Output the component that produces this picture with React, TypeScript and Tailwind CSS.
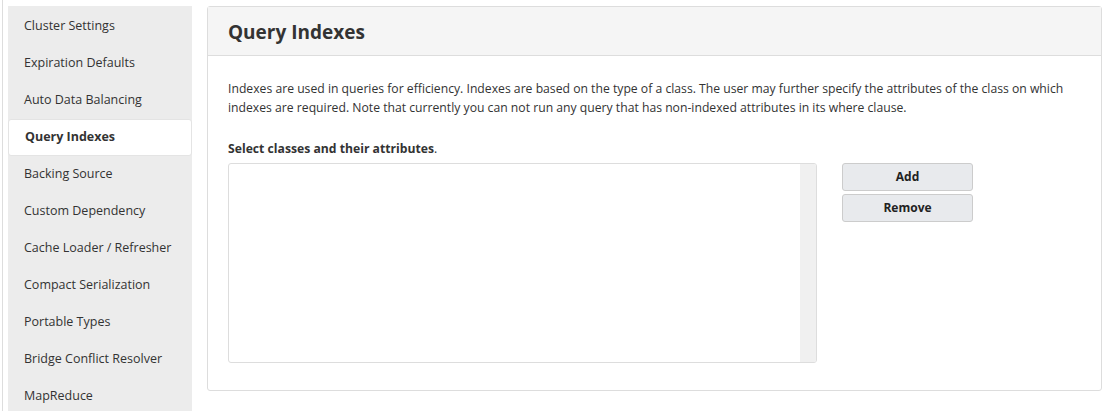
import React from "react";

const navItems = [
  "Cluster Settings",
  "Expiration Defaults",
  "Auto Data Balancing",
  "Query Indexes",
  "Backing Source",
  "Custom Dependency",
  "Cache Loader / Refresher",
  "Compact Serialization",
  "Portable Types",
  "Bridge Conflict Resolver",
  "MapReduce",
];

export default function App() {
  return (
    <div className="w-[1109px] h-[411px] overflow-hidden bg-white flex font-['Open_Sans',_sans-serif] text-[#333]">
      {/* Barre latérale */}
      <div className="w-[193px] shrink-0 pl-[2px]">
        <div className="h-full border-l border-[#ddd] pl-[5px] pt-[6px]">
          <div className="bg-[#ececec] h-full w-[184px] pt-[2px]">
            {navItems.map((item) => (
              <div
                key={item}
                className={`h-[37px] flex items-center pl-[16px] text-[12.5px] ${
                  item === "Query Indexes"
                    ? "bg-white font-bold rounded-[3px] border border-[#e4e4e4] pl-[15px]"
                    : ""
                }`}
              >
                {item}
              </div>
            ))}
          </div>
        </div>
      </div>

      {/* Panneau principal */}
      <div className="flex-1 pt-[6px] pl-[14px] pr-[7px] pb-[20px]">
        <div className="h-[385px] border border-[#ddd] rounded-[3px] flex flex-col">
          <div className="h-[49px] bg-[#f5f5f5] border-b border-[#ddd] flex items-center px-[20px] pt-[2px]">
            <h1 className="text-[19px] font-bold text-[#333]">Query Indexes</h1>
          </div>
          <div className="px-[20px] pt-[23px]">
            <p className="text-[12.2px] leading-[19px]">
              Indexes are used in queries for efficiency. Indexes are based on the type of a class. The user may further specify the attributes of the class on which indexes are required. Note that currently you can not run any query that has non-indexed attributes in its where clause.
            </p>
            <p className="text-[12.2px] font-bold mt-[22px] leading-[19px]">
              Select classes and their attributes<span className="font-normal">.</span>
            </p>
            <div className="flex mt-[5px] gap-[25px]">
              <div className="w-[589px] h-[200px] border border-[#ddd] rounded-[3px] flex justify-end overflow-hidden">
                <div className="w-[16px] h-full bg-[#f0f0f0]" />
              </div>
              <div className="flex flex-col gap-[3px]">
                <button className="w-[131px] h-[28px] bg-[#e8eaed] border border-[#ccc] rounded-[3px] text-[12px] font-bold text-[#222]">
                  Add
                </button>
                <button className="w-[131px] h-[28px] bg-[#e8eaed] border border-[#ccc] rounded-[3px] text-[12px] font-bold text-[#222]">
                  Remove
                </button>
              </div>
            </div>
          </div>
        </div>
      </div>
    </div>
  );
}
